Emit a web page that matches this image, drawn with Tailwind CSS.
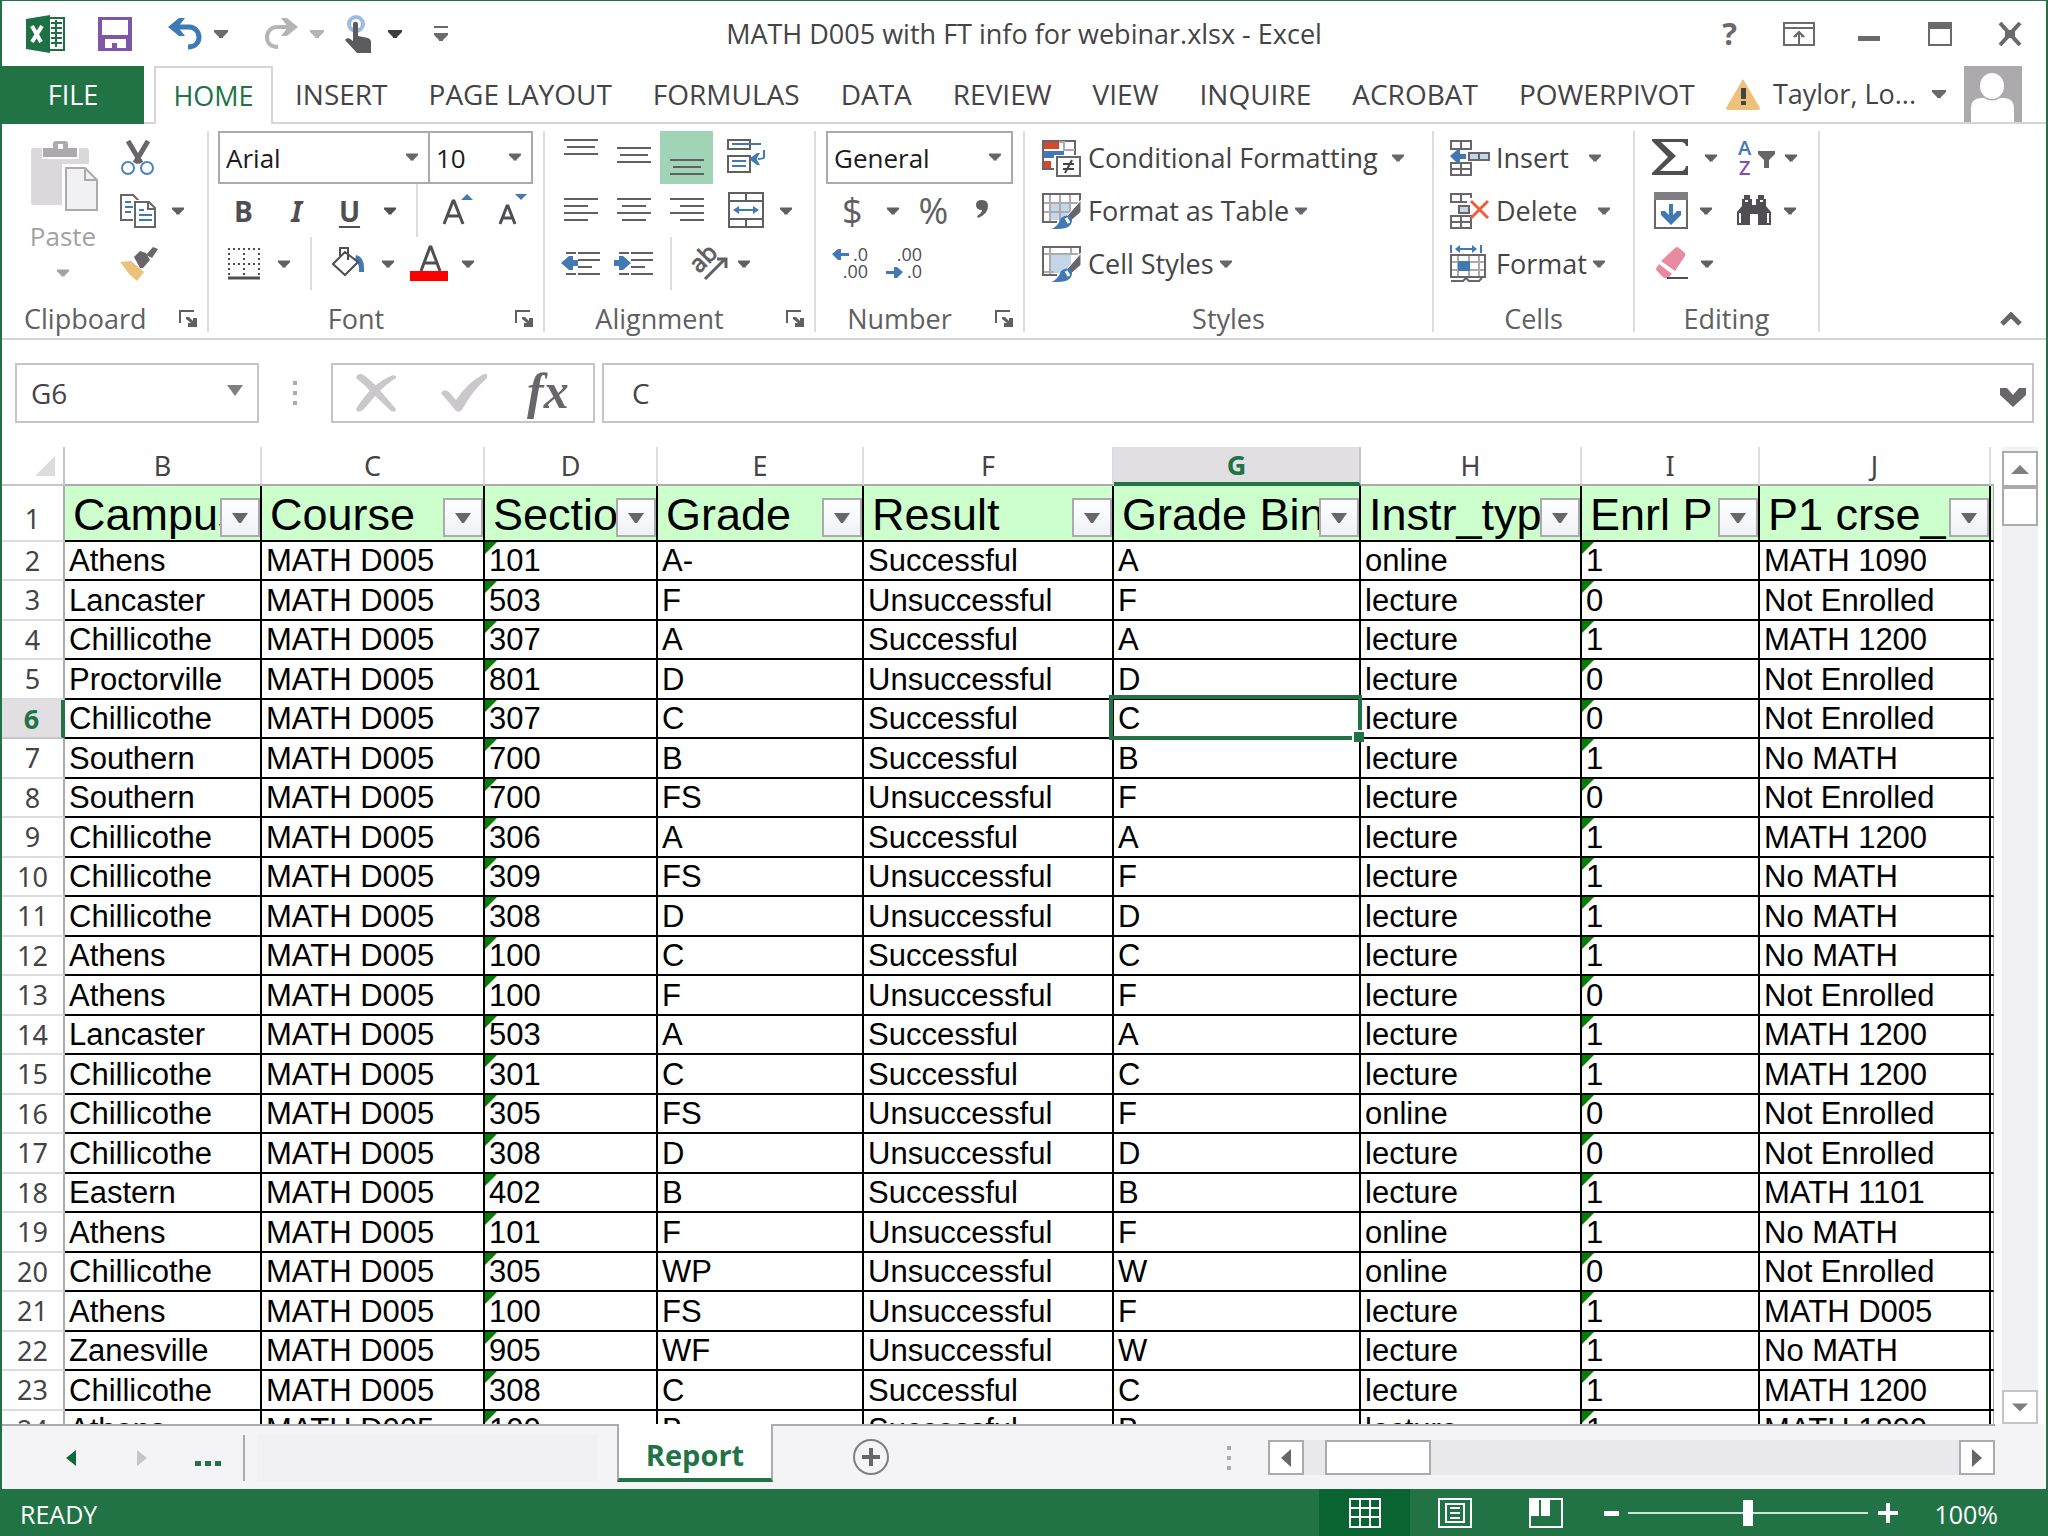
<!DOCTYPE html>
<html lang="en">
<head>
    <meta charset="UTF-8">
    <meta name="viewport" content="width=device-width, initial-scale=1.0">
    <title>MATH D005 with FT info for webinar.xlsx - Excel</title>
    <script src="https://cdn.jsdelivr.net/npm/@tailwindcss/browser@4"></script>
</head>
<body class="h-screen overflow-hidden bg-white font-['Open_Sans','Noto_Sans',sans-serif] text-[26px] text-[#444446]">

    <!-- Shared glyphs -->
    <svg class="hidden">
        <symbol id="caret" viewBox="0 0 14 8"><path d="M0 0h14v2L9 7v1H5V7L0 2z" fill="currentColor"/></symbol>
        <symbol id="launcher" viewBox="0 0 18 17"><path d="M1 13V1h14" fill="none" stroke="currentColor" stroke-width="2"/><path d="M7 7h3l4 4V8h4v9H9v-4h3L7 9z" fill="currentColor"/></symbol>
    </svg>

    <div class="flex h-full flex-col border-x-2 border-t border-[#217346]">

        <!-- Title bar -->
        <header class="grid h-[65px] shrink-0 grid-cols-[1fr_auto_1fr] items-center text-[#6a6a6c]">
            <div class="flex items-center pl-6">
                <svg class="h-[38px] w-[40px]" viewBox="0 0 40 38"><path d="M22 3h16v32H22z" fill="#fff" stroke="#1e7145" stroke-width="2"/><path d="M25 8h11M25 13h11M25 18h11M25 23h11M25 28h11M30 5v27" stroke="#1e7145" stroke-width="2"/><path d="M0 4L24 0v38L0 34z" fill="#1e7145"/><path d="M6 11l9 16M16 11L6 27" stroke="#fff" stroke-width="4"/></svg>
                <button class="ml-8" aria-label="Save"><svg class="h-[34px] w-[34px]" viewBox="0 0 34 34"><path d="M0 0h34v34H0z" fill="#7e57a8"/><path d="M4 3h26v15H4zM7 22h21v9H19v-5h-5v5H7z" fill="#fff"/></svg></button>
                <button class="ml-9" aria-label="Undo"><svg class="h-[34px] w-[34px]" viewBox="0 0 34 34"><path d="M6 10h15c6 0 10 5 10 10 0 6-4 10-11 10" fill="none" stroke="#3f7ab8" stroke-width="5"/><path d="M0 10L11 1h6l-7 9 7 9h-6z" fill="#3f7ab8"/></svg></button>
                <svg class="ml-3 h-2 w-3.5"><use href="#caret"/></svg>
                <button class="ml-9 text-[#b5b5b7]" aria-label="Redo"><svg class="h-[34px] w-[34px]" viewBox="0 0 34 34"><path d="M28 10H13C7 10 3 15 3 20c0 6 4 10 11 10" fill="none" stroke="currentColor" stroke-width="4"/><path d="M34 10L23 1h-6l7 9-7 9h6z" fill="currentColor"/></svg></button>
                <svg class="ml-3 h-2 w-3.5 text-[#b5b5b7]"><use href="#caret"/></svg>
                <button class="ml-5" aria-label="Touch mode"><svg class="h-[38px] w-[28px]" viewBox="0 0 28 38"><circle cx="12" cy="9" r="7" fill="none" stroke="#9dbbe0" stroke-width="4"/><path d="M9 9c0-3 5-3 5 0v12l10 2c2 1 3 2 3 4v11H13L1 25c2-3 5-2 8 1z" fill="#5c5c5e"/></svg></button>
                <svg class="ml-4 h-2 w-3.5 text-[#3c3c3e]"><use href="#caret"/></svg>
                <button class="ml-8" aria-label="Customize quick access"><svg class="h-[16px] w-[14px]" viewBox="0 0 14 16"><path d="M0 0h14v2H0zM0 7h14v2l-5 5v1H5v-1L0 9z" fill="currentColor"/></svg></button>
            </div>
            <h1 class="pt-0.5 whitespace-nowrap text-[27px] text-[#444446]">MATH D005 with FT info for webinar.xlsx - Excel</h1>
            <div class="flex items-center justify-end pr-6">
                <button class="text-[31px] leading-none font-bold" aria-label="Help">?</button>
                <button class="ml-[46px]" aria-label="Ribbon display options"><svg class="h-[24px] w-[32px]" viewBox="0 0 32 24"><path d="M1 1h30v22H1zM1 6h30M16 23V10M11 15l5-5 5 5" fill="none" stroke="currentColor" stroke-width="2"/><path d="M10 15l6-6 6 6h-4v-2h-4v2z" fill="currentColor"/></svg></button>
                <button class="ml-[43px]" aria-label="Minimize"><svg class="h-[24px] w-[22px]" viewBox="0 0 22 24"><path d="M0 14h22v5H0z" fill="currentColor"/></svg></button>
                <button class="ml-[48px]" aria-label="Maximize"><svg class="h-[24px] w-[24px]" viewBox="0 0 24 24"><path d="M1 1h22v22H1z" fill="none" stroke="currentColor" stroke-width="2"/><path d="M0 0h24v7H0z" fill="currentColor"/></svg></button>
                <button class="ml-[46px]" aria-label="Close"><svg class="h-[24px] w-[24px]" viewBox="0 0 24 24"><path d="M2 1l20 22M22 1L2 23" stroke="currentColor" stroke-width="4"/><path d="M7 8h10v8H7z" fill="currentColor"/></svg></button>
            </div>
        </header>

        <!-- Ribbon tabs -->
        <nav class="flex h-[58px] shrink-0 items-stretch whitespace-nowrap text-[28px]">
            <button class="w-[142px] bg-[#217346] text-[27px] text-white">FILE</button>
            <div class="w-2.5 border-b-2 border-[#d5d5d7]"></div>
            <button class="w-[119px] border-x-2 border-t-2 border-[#d5d5d7] text-[27px] text-[#217346]">HOME</button>
            <div class="flex flex-1 items-stretch border-b-2 border-[#d5d5d7] pl-0.5">
                <button class="pr-[21px] pl-5">INSERT</button>
                <button class="pr-[21px] pl-5">PAGE LAYOUT</button>
                <button class="pr-[21px] pl-5">FORMULAS</button>
                <button class="pr-[21px] pl-5">DATA</button>
                <button class="pr-[21px] pl-5">REVIEW</button>
                <button class="pr-[21px] pl-5">VIEW</button>
                <button class="pr-[21px] pl-5">INQUIRE</button>
                <button class="pr-[21px] pl-5">ACROBAT</button>
                <button class="pr-[21px] pl-5">POWERPIVOT</button>
                <div class="ml-auto flex items-center pr-6 text-[27px]">
                    <svg class="h-[32px] w-[36px]" viewBox="0 0 36 32"><path d="M18 1l17 29q0 2-2 2H3q-2 0-2-2z" fill="#ecc17a"/><path d="M16 10h5v11h-5zM16 23h5v4h-5z" fill="#444"/></svg>
                    <button class="ml-3 flex items-center">Taylor, Lo...<svg class="ml-4 h-2 w-3.5 text-[#6a6a6c]"><use href="#caret"/></svg></button>
                    <svg class="ml-[18px] h-[56px] w-[58px]" viewBox="0 0 58 56"><path d="M0 0h58v56H0z" fill="#acaaad"/><ellipse cx="28" cy="20" rx="12" ry="13" fill="#fff"/><path d="M7 56V42q0-9 9-10h4q8 5 16 0h5q9 1 9 10v14z" fill="#fff"/></svg>
                </div>
            </div>
        </nav>

        <!-- Ribbon -->
        <section class="flex h-[216px] shrink-0 border-b-2 border-[#d5d5d7] pt-[7px] pb-1.5 leading-none text-[#606062] [&_button]:flex [&_button]:items-center">

            <div class="flex w-[207px] flex-col border-r-2 border-[#dcdcde]">
                <div class="flex">
                    <button class="h-[159px] w-[106px] flex-col pt-2.5 pl-4 text-[#a3a1a4]">
                        <svg class="ml-1 h-[70px] w-[68px]" viewBox="0 0 68 70"><path d="M3 7h52q3 0 3 3v54H3q-3 0-3-3V10q0-3 3-3z" fill="#dad8db"/><path d="M11 5h37v13H11z" fill="#fff"/><path d="M12 7h10V3q0-3 3-3h9q3 0 3 3v4h9v9H12z" fill="#acaaad"/><path d="M27 3h5v5h-5z" fill="#fff"/><path d="M31 23h37v47H31z" fill="#fff"/><path d="M35 27h19l12 12v30H35z" fill="#f1f0f2" stroke="#acaaad" stroke-width="2"/><path d="M54 27v12h12" fill="none" stroke="#acaaad" stroke-width="2"/></svg>
                        <span class="mt-3">Paste</span>
                        <svg class="mt-5 h-2 w-3"><use href="#caret"/></svg>
                    </button>
                    <div class="flex flex-col pl-3">
                        <button class="h-[53px]" aria-label="Cut"><svg class="h-[36px] w-[36px]" viewBox="0 0 36 36"><path d="M8 1l13 22M28 1L15 23" stroke="#68666a" stroke-width="5"/><circle cx="8" cy="28" r="6" fill="#fff" stroke="#4a83bd" stroke-width="2"/><circle cx="27" cy="28" r="6" fill="#fff" stroke="#4a83bd" stroke-width="2"/></svg></button>
                        <button class="h-[53px] gap-4" aria-label="Copy"><svg class="h-[34px] w-[36px]" viewBox="0 0 36 34"><path d="M1 1h12l5 5v20H1z" fill="#fff" stroke="#68666a" stroke-width="2"/><path d="M5 8h6M5 13h8M5 18h6" stroke="#4179b5" stroke-width="2"/><path d="M13 6h18l5 6v22H13z" fill="#fff"/><path d="M15 8h14l6 6v19H15zM28 8v7h7" fill="#fff" stroke="#68666a" stroke-width="2"/><path d="M19 16h5M19 21h13M19 26h13" stroke="#4179b5" stroke-width="2"/></svg><svg class="h-2 w-3"><use href="#caret"/></svg></button>
                        <button class="h-[53px]" aria-label="Format painter"><svg class="h-[34px] w-[38px]" viewBox="0 0 38 34"><path d="M0 15l11-1 13 11-7 9L9 27z" fill="#ecc17a"/><path d="M14 10l6-6 6 2 4 7-7 8h-3z" fill="#68666a"/><path d="M26 8l7-8 5 2-6 9z" fill="#68666a"/></svg></button>
                    </div>
                </div>
                <div class="mt-auto flex items-center pl-[22px] text-[27px]">Clipboard<button class="ml-auto pr-2.5" aria-label="Clipboard settings"><svg class="h-[17px] w-[18px]"><use href="#launcher"/></svg></button></div>
            </div>

            <div class="flex w-[336px] flex-col border-r-2 border-[#dcdcde]">
                <div class="flex h-[53px] pl-[9px] text-[#1b1b1d]">
                    <div class="relative w-[212px]">
                        <select class="h-full w-full appearance-none border-2 border-[#acaaad] bg-white pl-1.5" aria-label="Font"><option>Arial</option></select>
                        <svg class="pointer-events-none absolute top-[22px] right-3 h-2 w-3 text-[#68666a]"><use href="#caret"/></svg>
                    </div>
                    <div class="relative -ml-0.5 w-[105px]">
                        <select class="h-full w-full appearance-none border-2 border-[#acaaad] bg-white pl-1.5" aria-label="Font size"><option>10</option></select>
                        <svg class="pointer-events-none absolute top-[22px] right-3 h-2 w-3 text-[#68666a]"><use href="#caret"/></svg>
                    </div>
                </div>
                <div class="flex h-[53px] items-center pl-2 text-[28px] text-[#504e52]">
                    <button class="w-[53px] justify-center font-bold" aria-label="Bold">B</button>
                    <button class="w-[53px] justify-center font-['Noto_Sans',sans-serif] font-bold italic" aria-label="Italic">I</button>
                    <button class="w-[53px] justify-center font-bold underline underline-offset-4" aria-label="Underline">U</button>
                    <button class="w-[40px] pl-2" aria-label="Underline styles"><svg class="h-2 w-3"><use href="#caret"/></svg></button>
                    <div class="h-full w-0.5 bg-[#dcdcde]"></div>
                    <button class="ml-6" aria-label="Grow font"><svg class="h-[34px] w-[32px]" viewBox="0 0 32 34"><path d="M2 30L11 7h1l9 23M5 22h13" fill="none" stroke="currentColor" stroke-width="3"/><path d="M19 6l6-6 6 6z" fill="#4179b5"/></svg></button>
                    <button class="ml-6" aria-label="Shrink font"><svg class="h-[34px] w-[30px]" viewBox="0 0 30 34"><path d="M2 30l7-18h1l7 18M4 24h11" fill="none" stroke="currentColor" stroke-width="3"/><path d="M17 0h12l-6 6z" fill="#4179b5"/></svg></button>
                </div>
                <div class="flex h-[53px] items-center pl-[19px]">
                    <button class="gap-[18px]" aria-label="Borders"><svg class="h-[34px] w-[32px]" viewBox="0 0 32 34"><path d="M1 1v28M16 1v28M31 1v28M0 2h32M0 17h32" stroke="#504e52" stroke-width="2" stroke-dasharray="2 3"/><path d="M0 31h32" stroke="#504e52" stroke-width="3"/></svg><svg class="h-2 w-3"><use href="#caret"/></svg></button>
                    <div class="ml-5 h-full w-0.5 bg-[#dcdcde]"></div>
                    <button class="ml-5 gap-4" aria-label="Fill color"><svg class="h-[34px] w-[34px]" viewBox="0 0 34 34"><path d="M24 8q9 2 8 17h-5q1-8-4-12z" fill="#4179b5"/><path d="M13 5L1 17l12 11 13-13z" fill="#fff" stroke="#504e52" stroke-width="2"/><path d="M8 9V1h8v12" fill="none" stroke="#504e52" stroke-width="2"/></svg><svg class="h-2 w-3"><use href="#caret"/></svg></button>
                    <button class="ml-4 gap-3.5" aria-label="Font color"><svg class="h-[38px] w-[38px]" viewBox="0 0 38 38"><path d="M11 26l9-24h1l9 24M14 18h13" fill="none" stroke="#504e52" stroke-width="3"/><path d="M0 26h38v10H0z" fill="#fe0000"/></svg><svg class="h-2 w-3"><use href="#caret"/></svg></button>
                </div>
                <div class="mt-auto flex items-center text-[27px]"><span class="flex-1 pr-3 text-center">Font</span><button class="pr-2.5" aria-label="Font settings"><svg class="h-[17px] w-[18px]"><use href="#launcher"/></svg></button></div>
            </div>

            <div class="flex w-[271px] flex-col border-r-2 border-[#dcdcde]">
                <div class="flex h-[53px] pl-[9px] [&>button]:w-[53px] [&>button]:justify-center">
                    <button aria-label="Top align"><svg class="h-[38px] w-[34px]" viewBox="0 0 34 38"><path d="M0 1h34M3 8h28M0 15h34" stroke="currentColor" stroke-width="2"/></svg></button>
                    <button aria-label="Middle align"><svg class="h-[38px] w-[34px]" viewBox="0 0 34 38"><path d="M0 9h34M3 16h28M0 23h34" stroke="currentColor" stroke-width="2"/></svg></button>
                    <button class="bg-[#a1d3b7]" aria-label="Bottom align"><svg class="h-[38px] w-[34px]" viewBox="0 0 34 38"><path d="M0 21h34M3 28h28M0 35h34" stroke="currentColor" stroke-width="2"/></svg></button>
                    <button class="ml-1.5" aria-label="Wrap text"><svg class="h-[38px] w-[38px] shrink-0" viewBox="0 0 38 38"><path d="M1 1h22v9H1zM1 17h22v16H1z" fill="none" stroke="currentColor" stroke-width="2"/><path d="M5 5h29M5 22h14M5 27h14M37 11v7q0 2-6 2" fill="none" stroke="#4179b5" stroke-width="2"/><path d="M22 20l8-6h3l-3 5v2l3 5h-3z" fill="#4179b5"/></svg></button>
                </div>
                <div class="flex h-[53px] pl-[9px] [&>button]:w-[53px] [&>button]:justify-center">
                    <button aria-label="Align left"><svg class="h-[26px] w-[34px]" viewBox="0 0 34 26"><path d="M0 1h34M0 8h24M0 15h34M0 22h24" stroke="currentColor" stroke-width="2"/></svg></button>
                    <button aria-label="Center"><svg class="h-[26px] w-[34px]" viewBox="0 0 34 26"><path d="M0 1h34M5 8h24M0 15h34M5 22h24" stroke="currentColor" stroke-width="2"/></svg></button>
                    <button aria-label="Align right"><svg class="h-[26px] w-[34px]" viewBox="0 0 34 26"><path d="M0 1h34M10 8h24M0 15h34M10 22h24" stroke="currentColor" stroke-width="2"/></svg></button>
                    <button class="ml-5 gap-4" aria-label="Merge and center"><svg class="h-[38px] w-[36px] shrink-0" viewBox="0 0 36 38"><path d="M1 1h34v34H1zM1 9h34M1 27h34M18 1v8M18 27v8" fill="none" stroke="currentColor" stroke-width="2"/><path d="M6 18h24" stroke="#4179b5" stroke-width="2"/><path d="M5 18l6-4v8zM31 18l-6-4v8z" fill="#4179b5"/></svg><svg class="h-2 w-3 shrink-0"><use href="#caret"/></svg></button>
                </div>
                <div class="flex h-[53px] items-center pl-[9px]">
                    <button class="w-[53px] justify-center" aria-label="Decrease indent"><svg class="h-[26px] w-[40px]" viewBox="0 0 40 26"><path d="M5 2h10M17 2h22M17 9h22M17 16h14M5 23h10M17 23h22" stroke="currentColor" stroke-width="2"/><path d="M0 12l8-7h4v4h5v6h-5v4H8z" fill="#4179b5"/></svg></button>
                    <button class="w-[53px] justify-center" aria-label="Increase indent"><svg class="h-[26px] w-[40px]" viewBox="0 0 40 26"><path d="M5 2h10M17 2h22M17 9h22M17 16h14M5 23h10M17 23h22" stroke="currentColor" stroke-width="2"/><path d="M17 12L9 5H5v4H0v6h5v4h4z" fill="#4179b5"/></svg></button>
                    <div class="ml-2.5 h-full w-0.5 bg-[#dcdcde]"></div>
                    <button class="ml-4 gap-2.5" aria-label="Orientation"><svg class="h-[38px] w-[40px]" viewBox="0 0 40 38"><text x="11" y="29" transform="rotate(-45 11 29)" font-family="Open Sans" font-size="24" fill="currentColor" stroke="currentColor">ab</text><path d="M17 34l19-19M29 14h9v9" fill="none" stroke="currentColor" stroke-width="3"/></svg><svg class="h-2 w-3"><use href="#caret"/></svg></button>
                </div>
                <div class="mt-auto flex items-center text-[27px]"><span class="flex-1 pr-3 text-center">Alignment</span><button class="pr-2.5" aria-label="Alignment settings"><svg class="h-[17px] w-[18px]"><use href="#launcher"/></svg></button></div>
            </div>

            <div class="flex w-[209px] flex-col border-r-2 border-[#dcdcde]">
                <div class="relative mx-2.5 h-[53px] shrink-0 text-[#1b1b1d]">
                    <select class="h-full w-full appearance-none border-2 border-[#acaaad] bg-white pl-1.5" aria-label="Number format"><option>General</option></select>
                    <svg class="pointer-events-none absolute top-[22px] right-3 h-2 w-3 text-[#68666a]"><use href="#caret"/></svg>
                </div>
                <div class="flex h-[53px] items-center pl-[26px] text-[36px]">
                    <button aria-label="Accounting format">$<svg class="ml-6 h-2 w-3"><use href="#caret"/></svg></button>
                    <button class="ml-5" aria-label="Percent">%</button>
                    <button class="ml-7" aria-label="Comma style"><svg class="h-[22px] w-[12px]" viewBox="0 0 12 22"><path d="M6 0q6 0 6 6 0 8-10 12l-1-2q5-3 5-6Q0 10 0 5q0-5 6-5z" fill="currentColor"/></svg></button>
                </div>
                <div class="flex h-[53px] items-center pl-4">
                    <button aria-label="Increase decimal"><svg class="h-[42px] w-[36px]" viewBox="0 0 36 42" font-family="Open Sans" font-size="18" fill="#504e52" text-anchor="end"><text x="36" y="18">.0</text><text x="36" y="35">.00</text><path d="M0 11l6-5h3v4h8v3H9v4H6z" fill="#4179b5"/></svg></button>
                    <button class="ml-[18px]" aria-label="Decrease decimal"><svg class="h-[42px] w-[36px]" viewBox="0 0 36 42" font-family="Open Sans" font-size="18" fill="#504e52" text-anchor="end"><text x="36" y="18">.00</text><text x="36" y="35">.0</text><path d="M17 29l-6-5H8v4H0v3h8v4h3z" fill="#4179b5"/></svg></button>
                </div>
                <div class="mt-auto flex items-center text-[27px]"><span class="flex-1 pr-3 text-center">Number</span><button class="pr-2.5" aria-label="Number settings"><svg class="h-[17px] w-[18px]"><use href="#launcher"/></svg></button></div>
            </div>

            <div class="flex w-[409px] flex-col border-r-2 border-[#dcdcde] text-[27px] whitespace-nowrap">
                <button class="h-[53px] gap-1.5 pl-[17px] text-[#444446]"><svg class="h-[38px] w-[40px]" viewBox="0 0 40 38"><path d="M1 2h32v28H1z" fill="#fff" stroke="#68666a" stroke-width="2"/><path d="M17 3h5v8h11M22 3v8" fill="none" stroke="#acaaad" stroke-width="2"/><path d="M2 3h15v7H2zM2 22h7v7H2z" fill="#d24a2c"/><path d="M2 12h20v7H2z" fill="#4179b5"/><path d="M12 16h28v22H12z" fill="#fff"/><path d="M15 18h23v19H15z" fill="#fff" stroke="#68666a" stroke-width="2"/><path d="M21 25h11M21 30h11M30 21l-7 13" stroke="#444" stroke-width="2"/></svg>Conditional Formatting<svg class="ml-2 h-2 w-3 text-[#68666a]"><use href="#caret"/></svg></button>
                <button class="h-[53px] gap-1.5 pl-[17px] text-[#444446]"><svg class="h-[38px] w-[40px]" viewBox="0 0 40 38"><path d="M9 12h20v16H9z" fill="#c4d6e8"/><path d="M2 11h34M2 20h26M8 2v28M18 2v28M28 2v20" stroke="#acaaad" stroke-width="2"/><path d="M1 31V2h37v7M1 30h14" fill="none" stroke="#68666a" stroke-width="2"/><path d="M39 8v12l-9 8-5-4z" fill="#68666a" stroke="#fff"/><path d="M9 37q7-2 10-11 6-5 11 0 1 11-14 11z" fill="#4179b5"/><path d="M24 26l3 5" stroke="#fff" stroke-width="3"/></svg>Format as Table<svg class="h-2 w-3 text-[#68666a]"><use href="#caret"/></svg></button>
                <button class="h-[53px] gap-1.5 pl-[17px] text-[#444446]"><svg class="h-[38px] w-[40px]" viewBox="0 0 40 38"><path d="M9 10h20v18H9z" fill="#c4d6e8"/><path d="M2 9h34M2 27h10M8 2v28M29 2v8" stroke="#acaaad" stroke-width="2"/><path d="M1 31V2h37v7M1 30h14" fill="none" stroke="#68666a" stroke-width="2"/><path d="M39 8v12l-9 8-5-4z" fill="#68666a" stroke="#fff"/><path d="M9 37q7-2 10-11 6-5 11 0 1 11-14 11z" fill="#4179b5"/><path d="M24 26l3 5" stroke="#fff" stroke-width="3"/></svg>Cell Styles<svg class="h-2 w-3 text-[#68666a]"><use href="#caret"/></svg></button>
                <div class="mt-auto text-center">Styles</div>
            </div>

            <div class="flex w-[201px] flex-col border-r-2 border-[#dcdcde] text-[27px]">
                <button class="h-[53px] pl-4 text-[#444446]"><svg class="h-[38px] w-[40px]" viewBox="0 0 40 38"><path d="M1 2h20v8H1zM11 2v8M1 24h20v12H1zM1 30h20M11 24v12" fill="none" stroke="#68666a" stroke-width="2"/><path d="M19 14h20v7H19z" fill="#c4d6e8" stroke="#68666a" stroke-width="2"/><path d="M29 14v7" stroke="#68666a" stroke-width="2"/><path d="M0 17l7-6h3v4h6v5h-6v4H7z" fill="#4179b5"/></svg><span class="ml-1.5">Insert</span><svg class="ml-5 h-2 w-3 text-[#68666a]"><use href="#caret"/></svg></button>
                <button class="h-[53px] pl-4 text-[#444446]"><svg class="h-[38px] w-[40px]" viewBox="0 0 40 38"><path d="M21 6V2H1v8h16M11 2v8M1 24h20v12H1zM1 30h20M11 24v12" fill="none" stroke="#68666a" stroke-width="2"/><path d="M9 14h10v7H9z" fill="#c4d6e8" stroke="#68666a" stroke-width="2"/><path d="M21 9l17 17M38 9L21 26" stroke="#e8603f" stroke-width="3"/></svg><span class="ml-1.5">Delete</span><svg class="ml-5 h-2 w-3 text-[#68666a]"><use href="#caret"/></svg></button>
                <button class="h-[53px] pl-4 text-[#444446]"><svg class="h-[38px] w-[40px]" viewBox="0 0 40 38"><path d="M1 0v8M31 0v8M6 4h20" stroke="#4179b5" stroke-width="2"/><path d="M5 4l5-4v8zM27 4l-5-4v8z" fill="#4179b5"/><path d="M8 10v22M19 10v22M29 10v22M1 17h34M1 25h34" stroke="#acaaad" stroke-width="2"/><path d="M1 10h34v22H1zM1 36h12l3-3 3 3h10l3-3" fill="none" stroke="#68666a" stroke-width="2"/><path d="M8 16h12v10H8z" fill="#4179b5"/></svg><span class="ml-1.5">Format</span><svg class="ml-1.5 h-2 w-3 text-[#68666a]"><use href="#caret"/></svg></button>
                <div class="mt-auto text-center">Cells</div>
            </div>

            <div class="flex w-[185px] flex-col border-r-2 border-[#dcdcde]">
                <div class="flex h-[53px] items-center pl-[17px]">
                    <button aria-label="AutoSum"><svg class="h-[38px] w-[37px]" viewBox="0 0 37 38"><path d="M0 0h36v7h-2q-1-4-5-4H9l15 14L8 32h21q4 0 5-5h2v9H0v-2l16-16L0 2z" fill="#504e52"/></svg><svg class="ml-4 h-2 w-3"><use href="#caret"/></svg></button>
                    <button class="ml-5" aria-label="Sort and filter"><svg class="h-[42px] w-[38px]" viewBox="0 0 38 42" font-family="Open Sans" font-size="20" font-weight="600"><text x="1" y="18" fill="#4179b5">A</text><text x="2" y="38" fill="#8050b0">Z</text><path d="M21 14h17v3l-6 6v8h-5v-8l-6-6z" fill="#68666a"/></svg><svg class="ml-2.5 h-2 w-3"><use href="#caret"/></svg></button>
                </div>
                <div class="flex h-[53px] items-center pl-[19px]">
                    <button aria-label="Fill"><svg class="h-[37px] w-[34px]" viewBox="0 0 34 37"><path d="M1 1h32v35H1z" fill="none" stroke="#68666a" stroke-width="2"/><path d="M0 0h34v8H0z" fill="#807e82"/><path d="M15 12h4v11l4-4h4v4L17 33 7 23v-4h4l4 4z" fill="#4179b5"/></svg><svg class="ml-3 h-2 w-3"><use href="#caret"/></svg></button>
                    <button class="ml-6" aria-label="Find and select"><svg class="h-[32px] w-[36px]" viewBox="0 0 36 32"><path d="M8 0h6v4h2v6h4V4h2V0h6v4h2v7l5 6v13H22V19h-8v11H1V17l5-6V4h2z" fill="#504e52"/><path d="M9 6h3M24 6h3M4 18v10M32 18v10" stroke="#fff" stroke-width="2"/></svg><svg class="ml-3 h-2 w-3"><use href="#caret"/></svg></button>
                </div>
                <div class="flex h-[53px] items-center pl-5">
                    <button aria-label="Clear"><svg class="h-[34px] w-[34px]" viewBox="0 0 34 34"><path d="M20 1q1-2 4 0l5 4q2 2 1 4L20 24 6 14z" fill="#e98ba0"/><path d="M4 17l13 10-4 4q-3 1-5-1l-6-6q-2-2 0-4z" fill="#e98ba0"/><path d="M12 31h21" stroke="#504e52" stroke-width="2"/></svg><svg class="ml-3 h-2 w-3"><use href="#caret"/></svg></button>
                </div>
                <div class="mt-auto text-center text-[27px]">Editing</div>
            </div>

            <button class="mt-auto ml-auto pr-6 pb-1.5" aria-label="Collapse ribbon"><svg class="h-[14px] w-[22px]" viewBox="0 0 22 14"><path d="M2 12l9-9 9 9" fill="none" stroke="#68666a" stroke-width="5"/></svg></button>
        </section>

        <!-- Formula bar -->
        <section class="mt-[23px] flex h-[60px] shrink-0 pr-3 pl-[13px] text-[28px] text-[#444446]">
            <div class="relative w-[244px]">
                <input class="h-full w-full border-2 border-[#c6c4c7] pl-3.5" value="G6" aria-label="Name box">
                <svg class="absolute top-[22px] right-4 h-3 w-4" viewBox="0 0 16 12"><path d="M0 0h16L8 11z" fill="#807e82"/></svg>
            </div>
            <svg class="mt-[18px] ml-[34px] h-6 w-1" viewBox="0 0 4 24"><path d="M0 0h4v4H0zM0 10h4v4H0zM0 20h4v4H0z" fill="#acaaad"/></svg>
            <div class="ml-[34px] flex w-[264px] items-center border-2 border-[#c6c4c7] pl-[22px]">
                <button aria-label="Cancel"><svg class="h-[38px] w-[42px]" viewBox="0 0 42 38"><path d="M1 4q1-5 6-4 8 5 16 14l18 21-1 3-4-1-18-17Q10 11 1 4z" fill="#cac8cb"/><path d="M41 4Q31 10 22 20L8 36q-6 4-7-1Q17 9 38 1l3 1z" fill="#cac8cb"/></svg></button>
                <button class="ml-11" aria-label="Enter"><svg class="h-[38px] w-[46px]" viewBox="0 0 46 38"><path d="M0 19q3-5 8-1l7 8Q27 8 43 0h3v4Q31 17 21 36l-3 2-3-1z" fill="#cac8cb"/></svg></button>
                <button class="ml-10 pb-1 font-['Liberation_Serif',serif] text-[50px] leading-none font-bold text-[#68666a] italic" aria-label="Insert function">fx</button>
            </div>
            <div class="relative ml-[7px] flex-1">
                <input class="h-full w-full border-2 border-[#c6c4c7] pl-7" value="C" aria-label="Formula">
                <svg class="absolute top-[25px] right-2 h-5 w-[26px]" viewBox="0 0 26 20"><path d="M0 0h7l6 7 6-7h7v7L13 19 0 7z" fill="#68666a"/></svg>
            </div>
        </section>

        <!-- Sheet -->
        <main class="mt-6 flex min-h-0 flex-1 overflow-hidden">
            <div class="w-[1992px] shrink-0 overflow-hidden">
                <table class="w-[1993px] table-fixed border-separate border-spacing-0 font-['Liberation_Sans',Arial,sans-serif] text-[31px] whitespace-nowrap text-black">
                    <colgroup>
                        <col class="w-[63px]"><col class="w-[197px]"><col class="w-[223px]"><col class="w-[173px]"><col class="w-[206px]"><col class="w-[250px]"><col class="w-[247px]"><col class="w-[221px]"><col class="w-[178px]"><col class="w-[231px]"><col class="w-[4px]">
                    </colgroup>
                    <thead id="letters" class="font-['Noto_Sans',sans-serif] text-[27px] text-[#444446]"></thead>
                    <tbody id="filters"></tbody>
                    <tbody id="rows"></tbody>
                </table>
            </div>
            <div class="mr-2 ml-auto flex w-9 shrink-0 flex-col bg-[#f1f0f2]">
                <button class="mt-1 flex h-9 items-center justify-center border-2 border-[#acaaad] bg-white" aria-label="Scroll up"><svg class="h-[9px] w-[18px]" viewBox="0 0 18 9"><path d="M9 0l9 9H0z" fill="#807e82"/></svg></button>
                <div class="h-[39px] border-2 border-[#acaaad] bg-white"></div>
                <button class="mt-auto flex h-[34px] items-center justify-center border-2 border-[#c6c4c7] bg-white" aria-label="Scroll down"><svg class="h-[9px] w-[16px]" viewBox="0 0 18 9"><path d="M0 0h18L9 9z" fill="#807e82"/></svg></button>
            </div>
        </main>

        <!-- Sheet tabs -->
        <section class="flex h-[65px] shrink-0 bg-[#f4f3f5]">
            <div class="flex w-[615px] items-center border-t-2 border-[#acaaad] pl-16">
                <button aria-label="Previous sheet"><svg class="h-4 w-2.5" viewBox="0 0 10 16"><path d="M10 0v16L0 8z" fill="#0e6b3a"/></svg></button>
                <button class="ml-[61px]" aria-label="Next sheet"><svg class="h-4 w-2.5" viewBox="0 0 10 16"><path d="M0 0v16l10-8z" fill="#c6c4c7"/></svg></button>
                <button class="mt-3 ml-12" aria-label="More sheets"><svg class="h-[5px] w-[26px]" viewBox="0 0 26 5"><path d="M0 0h6v5H0zM10 0h6v5h-6zM20 0h6v5h-6z" fill="#217346"/></svg></button>
                <div class="ml-[22px] h-[46px] w-0.5 bg-[#acaaad]"></div>
                <div class="ml-3 h-[46px] w-[340px] bg-[#f1f0f2]"></div>
            </div>
            <button class="h-[58px] w-[156px] border-x-2 border-b-4 border-x-[#acaaad] border-b-[#217346] bg-white pt-1.5 text-[29px] leading-none font-bold text-[#217346]">Report</button>
            <div class="flex flex-1 items-center border-t-2 border-[#acaaad]">
                <button class="ml-[78px]" aria-label="New sheet"><svg class="h-[38px] w-[40px]" viewBox="0 0 40 38"><circle cx="20" cy="18" r="17" fill="none" stroke="#807e82" stroke-width="2"/><path d="M11 16h7V9h4v7h7v4h-7v7h-4v-7h-7z" fill="#68666a"/></svg></button>
                <svg class="ml-auto h-6 w-1" viewBox="0 0 4 24"><path d="M0 0h4v4H0zM0 10h4v4H0zM0 20h4v4H0z" fill="#acaaad"/></svg>
                <div class="ml-[37px] flex h-[35px] w-[727px] bg-[#e9e8ea]">
                    <button class="flex w-9 items-center justify-center border-2 border-[#acaaad] bg-white" aria-label="Scroll left"><svg class="h-[18px] w-[10px]" viewBox="0 0 10 18"><path d="M10 0v18L0 9z" fill="#68666a"/></svg></button>
                    <div class="ml-[21px] w-[106px] border-2 border-[#acaaad] bg-white"></div>
                    <button class="ml-auto flex w-9 items-center justify-center border-2 border-[#acaaad] bg-white" aria-label="Scroll right"><svg class="h-[18px] w-[10px]" viewBox="0 0 10 18"><path d="M0 0v18l10-9z" fill="#68666a"/></svg></button>
                </div>
            </div>
            <div class="w-[51px]"></div>
        </section>

        <!-- Status bar -->
        <footer class="flex h-[47px] shrink-0 items-center bg-[#217346] text-[25px] text-white">
            <span class="pt-1 pl-[18px] leading-none">READY</span>
            <button class="ml-auto flex h-full w-[91px] items-center justify-center bg-[#0a6332]" aria-label="Normal view"><svg class="h-[30px] w-[32px]" viewBox="0 0 32 30"><path d="M1 1h30v28H1zM1 10h30M1 19h30M11 1v28M21 1v28" fill="none" stroke="currentColor" stroke-width="2"/></svg></button>
            <button class="ml-[28px]" aria-label="Page layout view"><svg class="h-[30px] w-[34px]" viewBox="0 0 34 30"><path d="M1 1h32v28H1zM8 6h18v18H8zM12 10h10M12 15h10M12 20h10" fill="none" stroke="currentColor" stroke-width="2"/></svg></button>
            <button class="ml-[57px]" aria-label="Page break view"><svg class="h-[30px] w-[34px]" viewBox="0 0 34 30"><path d="M1 1h32v28H1z" fill="none" stroke="currentColor" stroke-width="2"/><path d="M2 2h8v16H2zM12 2h9v16h-9z" fill="currentColor"/></svg></button>
            <button class="ml-[41px]" aria-label="Zoom out"><svg class="h-5 w-[15px]" viewBox="0 0 15 20"><path d="M0 8h15v5H0z" fill="currentColor"/></svg></button>
            <input type="range" min="0" max="100" value="50" aria-label="Zoom" class="ml-[9px] h-[26px] w-[240px] appearance-none bg-transparent [&::-webkit-slider-runnable-track]:h-0.5 [&::-webkit-slider-runnable-track]:bg-[#cfe3d8] [&::-webkit-slider-thumb]:-mt-3 [&::-webkit-slider-thumb]:h-[26px] [&::-webkit-slider-thumb]:w-[10px] [&::-webkit-slider-thumb]:appearance-none [&::-webkit-slider-thumb]:bg-white">
            <button class="ml-[10px]" aria-label="Zoom in"><svg class="h-5 w-5" viewBox="0 0 20 20"><path d="M8 0h4v8h8v4h-8v8H8v-8H0V8h8z" fill="currentColor"/></svg></button>
            <button class="mr-12 ml-9 pt-1 leading-none">100%</button>
        </footer>
    </div>

    <script>
        const letters = ['B', 'C', 'D', 'E', 'F', 'G', 'H', 'I', 'J'];
        const titles = ['Campus', 'Course', 'Section', 'Grade', 'Result', 'Grade Bin', 'Instr_type', 'Enrl P', 'P1 crse_'];
        // campus, section, grade, instruction type, enrolled, next course
        const data = [
            ['Athens', '101', 'A-', 'online', '1', 'MATH 1090'],
            ['Lancaster', '503', 'F', 'lecture', '0', 'Not Enrolled'],
            ['Chillicothe', '307', 'A', 'lecture', '1', 'MATH 1200'],
            ['Proctorville', '801', 'D', 'lecture', '0', 'Not Enrolled'],
            ['Chillicothe', '307', 'C', 'lecture', '0', 'Not Enrolled'],
            ['Southern', '700', 'B', 'lecture', '1', 'No MATH'],
            ['Southern', '700', 'FS', 'lecture', '0', 'Not Enrolled'],
            ['Chillicothe', '306', 'A', 'lecture', '1', 'MATH 1200'],
            ['Chillicothe', '309', 'FS', 'lecture', '1', 'No MATH'],
            ['Chillicothe', '308', 'D', 'lecture', '1', 'No MATH'],
            ['Athens', '100', 'C', 'lecture', '1', 'No MATH'],
            ['Athens', '100', 'F', 'lecture', '0', 'Not Enrolled'],
            ['Lancaster', '503', 'A', 'lecture', '1', 'MATH 1200'],
            ['Chillicothe', '301', 'C', 'lecture', '1', 'MATH 1200'],
            ['Chillicothe', '305', 'FS', 'online', '0', 'Not Enrolled'],
            ['Chillicothe', '308', 'D', 'lecture', '0', 'Not Enrolled'],
            ['Eastern', '402', 'B', 'lecture', '1', 'MATH 1101'],
            ['Athens', '101', 'F', 'online', '1', 'No MATH'],
            ['Chillicothe', '305', 'WP', 'online', '0', 'Not Enrolled'],
            ['Athens', '100', 'FS', 'lecture', '1', 'MATH D005'],
            ['Zanesville', '905', 'WF', 'lecture', '1', 'No MATH'],
            ['Chillicothe', '308', 'C', 'lecture', '1', 'MATH 1200'],
            ['Athens', '100', 'B', 'lecture', '1', 'MATH 1200'],
        ];

        const flag = '<svg class="absolute top-0 left-0 h-3 w-3" viewBox="0 0 12 12"><path d="M0 0h12L0 12z" fill="#008000"/></svg>';
        const rowHead = 'border-r-2 border-b-2 border-r-[#acaaad] border-b-[#dcdcde] p-0 text-center font-[\'Noto_Sans\',sans-serif] text-[27px] leading-[36px] font-normal text-[#444446]';
        const rowHeadOn = 'border-r-4 border-b-2 border-r-[#217346] border-b-[#c6c4c7] bg-[#e1dfe2] p-0 text-center font-[\'Noto_Sans\',sans-serif] text-[27px] leading-[36px] font-bold text-[#217346]';

        document.getElementById('letters').innerHTML = '<tr class="h-[39px]">'
            + '<th class="border-r-2 border-b-2 border-r-[#c6c4c7] border-b-[#c6c4c7] p-0"><svg class="ml-auto mr-2 h-5 w-5" viewBox="0 0 20 20"><path d="M20 0v20H0z" fill="#dcdcde"/></svg></th>'
            + letters.map(l => l === 'G'
                ? `<th class="border-r-2 border-b-4 border-r-[#c6c4c7] border-b-[#217346] bg-[#e1dfe2] p-0 leading-[35px] font-bold text-[#217346]">${l}</th>`
                : `<th class="border-r-2 border-b-2 border-r-[#dcdcde] border-b-[#acaaad] p-0 leading-[35px] font-normal">${l}</th>`).join('')
            + '<th class="border-b-2 border-[#acaaad] p-0"></th></tr>';

        document.getElementById('filters').innerHTML = `<tr class="h-[56px]"><th class="${rowHead}"><div class="pt-3">1</div></th>`
            + titles.map(t => `<td class="border-r-2 border-b-2 border-black bg-[#ccffcc] p-0"><div class="flex h-[54px]">
                <span class="min-w-0 flex-1 overflow-hidden pl-2 text-[45px] leading-[58px]">${t}</span>
                <button class="mt-3 flex h-[39px] w-10 shrink-0 items-center justify-center border-2 border-[#acaaad] bg-gradient-to-b from-white to-[#eef1f8]" aria-label="Filter ${t}"><svg class="h-[10px] w-4" viewBox="0 0 16 10"><path d="M0 0h16L9 10H7z" fill="#68666a"/></svg></button></div></td>`).join('')
            + '<td class="border-r-2 border-b-2 border-r-[#acaaad] border-b-black bg-[#ccffcc] p-0"></td></tr>';

        document.getElementById('rows').innerHTML = data.map((d, i) => {
            const n = i + 2;
            const result = 'ABC'.includes(d[2][0]) ? 'Successful' : 'Unsuccessful';
            const cells = [d[0], 'MATH D005', d[1], d[2], result, d[2][0], d[3], d[4], d[5]];
            return `<tr class="odd:h-[39px] even:h-[40px]"><th class="${n === 6 ? rowHeadOn : rowHead}">${n}</th>`
                + cells.map((c, k) => {
                    const box = n === 6 && k === 5
                        ? '<div class="absolute -top-[5px] -right-[3px] -bottom-[3px] -left-[5px] z-10 border-4 border-[#217346]"></div><div class="absolute -right-[5px] -bottom-[5px] z-10 h-3 w-3 border-t-2 border-l-2 border-white bg-[#217346]"></div>' : '';
                    return `<td class="relative border-r-2 border-b-2 border-black p-0 pt-px pl-1 leading-[36px]">${k === 2 || k === 7 ? flag : ''}${box}<span class="relative">${c}</span></td>`;
                }).join('')
                + '<td class="border-r-2 border-b-2 border-r-[#acaaad] border-b-black p-0"></td></tr>';
        }).join('');
    </script>
</body>
</html>
